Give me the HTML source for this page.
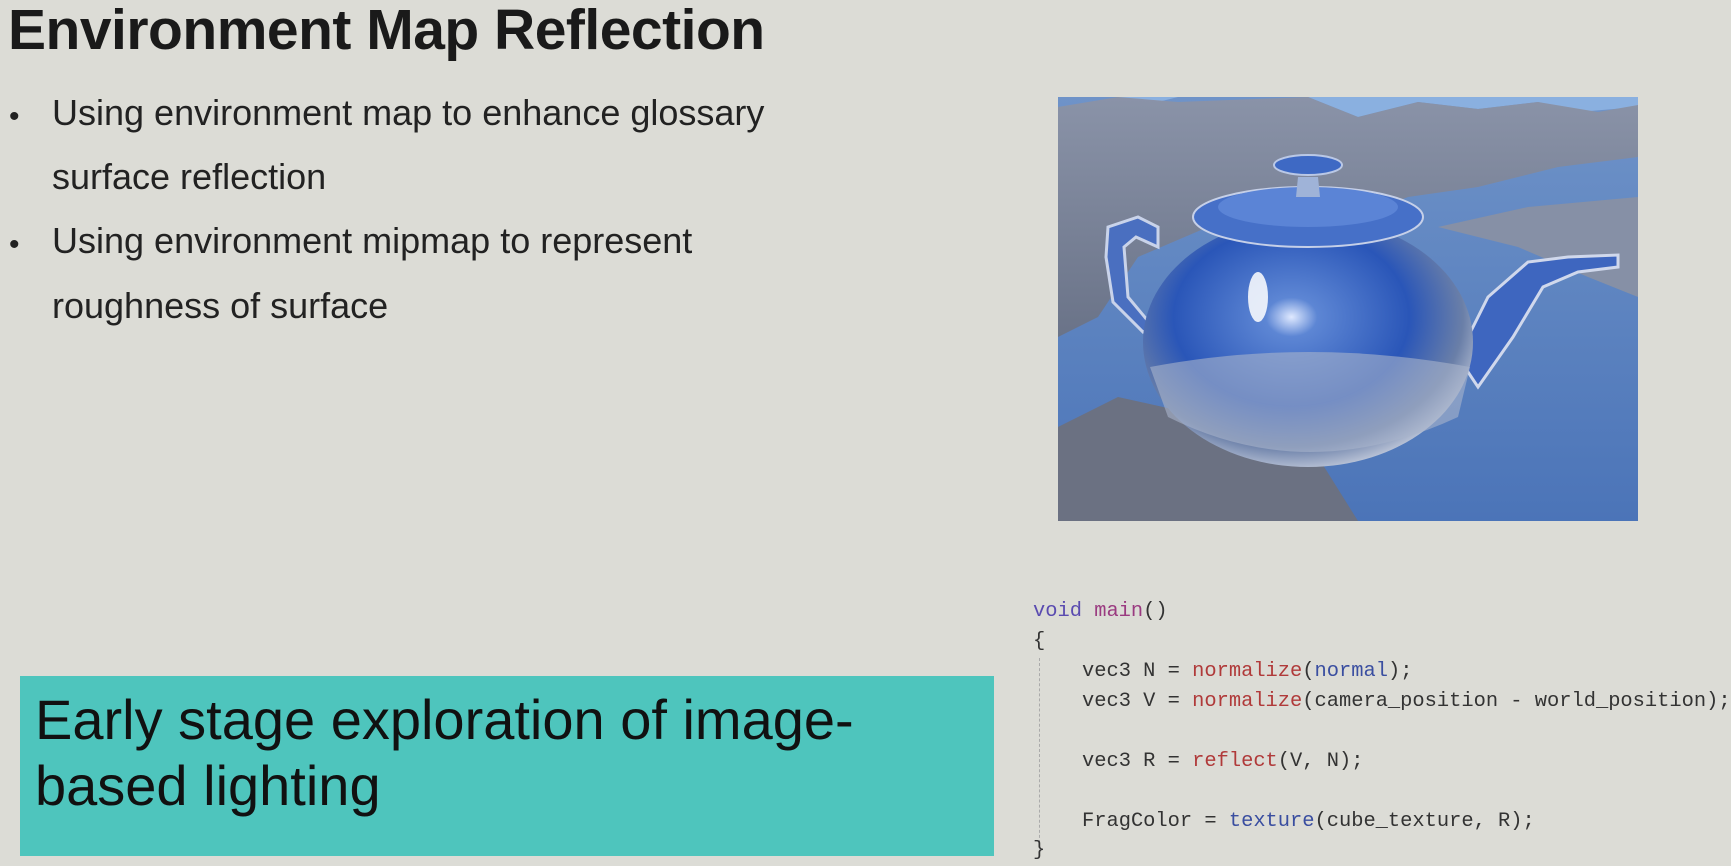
<!DOCTYPE html>
<html><head><meta charset="utf-8"><style>
html,body{margin:0;padding:0;}
body{width:1731px;height:866px;background:#dcdcd6;position:relative;overflow:hidden;font-family:"Liberation Sans",Arial,sans-serif;color:#1a1a1a;}
.t{position:absolute;left:8px;top:-3px;font-size:57px;font-weight:bold;letter-spacing:-0.5px;white-space:nowrap;}
.b{position:absolute;font-size:36px;white-space:nowrap;color:#222;}
.dot{position:absolute;font-size:30px;color:#222;}
.box{position:absolute;left:20px;top:676px;width:974px;height:180px;background:#4ec5bd;}
.box div{position:absolute;left:15px;font-size:56px;color:#111;white-space:nowrap;}
.code{position:absolute;font-family:"Liberation Mono",monospace;font-size:20.4px;color:#333;white-space:pre;}
.k{color:#5a4bb0}.f{color:#b03a3a}.m{color:#9a3a80}.n{color:#3a4ea0}
</style></head><body>
<div class="t">Environment Map Reflection</div>
<div class="dot" style="left:9px;top:100px">•</div>
<div class="b" style="left:52px;top:92px">Using environment map to enhance glossary</div>
<div class="b" style="left:52px;top:156px">surface reflection</div>
<div class="dot" style="left:9px;top:228px">•</div>
<div class="b" style="left:52px;top:220px">Using environment mipmap to represent</div>
<div class="b" style="left:52px;top:285px">roughness of surface</div>

<svg style="position:absolute;left:1058px;top:97px" width="580" height="424" viewBox="0 0 580 424">
<defs>
<linearGradient id="sky" x1="0" y1="0" x2="0" y2="1"><stop offset="0" stop-color="#6f93c8"/><stop offset="1" stop-color="#4b74b8"/></linearGradient>
<radialGradient id="body" cx="0.45" cy="0.4" r="0.65"><stop offset="0" stop-color="#dfe9ff"/><stop offset="0.12" stop-color="#5d86d4"/><stop offset="0.55" stop-color="#2a56b8"/><stop offset="0.8" stop-color="#6a7fa8"/><stop offset="1" stop-color="#d8dde8"/></radialGradient>
<linearGradient id="mt" x1="0" y1="0" x2="0" y2="1"><stop offset="0" stop-color="#8a93a8"/><stop offset="1" stop-color="#6a7388"/></linearGradient>
</defs>
<rect width="580" height="424" fill="url(#sky)"/>
<path d="M0 0 L580 0 L580 10 L520 15 L480 5 L420 12 L360 5 L300 20 L250 0 L120 0 L80 10 L60 0 L0 0Z" fill="#8ab0e0"/>
<path d="M0 10 L60 0 L120 5 L250 0 L300 20 L360 5 L420 12 L480 5 L540 15 L580 8 L580 60 L500 70 L420 90 L350 100 L300 120 L230 110 L150 130 L80 160 L40 220 L0 240Z" fill="url(#mt)"/>
<path d="M380 130 L470 110 L580 100 L580 200 L530 180 L460 150 Z" fill="#8690a6"/>
<path d="M0 330 L60 300 L150 320 L260 360 L300 424 L0 424Z" fill="#6b7182"/>
<path d="M50 130 L80 120 L100 130 L100 150 L78 140 L66 150 L70 200 L95 230 L85 235 L55 205 L48 160Z" fill="#4a6fc0" stroke="#c9d3ea" stroke-width="3"/>
<path d="M400 260 L430 200 L470 165 L510 160 L560 158 L560 170 L520 175 L485 190 L455 240 L420 290Z" fill="#3e66bf" stroke="#d0d8ec" stroke-width="3"/>
<ellipse cx="250" cy="245" rx="165" ry="125" fill="url(#body)"/>
<path d="M92 270 Q250 240 412 270 L400 320 Q250 390 110 320Z" fill="#a9b4cc" opacity="0.6"/>
<ellipse cx="250" cy="120" rx="115" ry="30" fill="#4670c8" stroke="#c6d0e8" stroke-width="2"/>
<ellipse cx="250" cy="110" rx="90" ry="20" fill="#5b84d6"/>
<path d="M240 80 L260 80 L262 100 L238 100Z" fill="#9fb3d8"/>
<ellipse cx="250" cy="68" rx="34" ry="10" fill="#3e69c4" stroke="#bac8e6" stroke-width="2"/>
<ellipse cx="200" cy="200" rx="10" ry="25" fill="#ffffff" opacity="0.85"/>
</svg>

<div class="code" style="left:1033px;top:600px"><span class="k">void</span> <span class="m">main</span>()</div>
<div class="code" style="left:1033px;top:630px">{</div>
<div style="position:absolute;left:1039px;top:658px;height:190px;border-left:1px dashed #aaa"></div>
<div class="code" style="left:1082px;top:660px">vec3 N = <span class="f">normalize</span>(<span class="n">normal</span>);</div>
<div class="code" style="left:1082px;top:690px">vec3 V = <span class="f">normalize</span>(camera_position - world_position);</div>
<div class="code" style="left:1082px;top:750px">vec3 R = <span class="f">reflect</span>(V, N);</div>
<div class="code" style="left:1082px;top:810px">FragColor = <span class="n">texture</span>(cube_texture, R);</div>
<div class="code" style="left:1033px;top:839px">}</div>

<div class="box">
<div style="top:11px">Early stage exploration of image-</div>
<div style="top:77px">based lighting</div>
</div>
</body></html>
